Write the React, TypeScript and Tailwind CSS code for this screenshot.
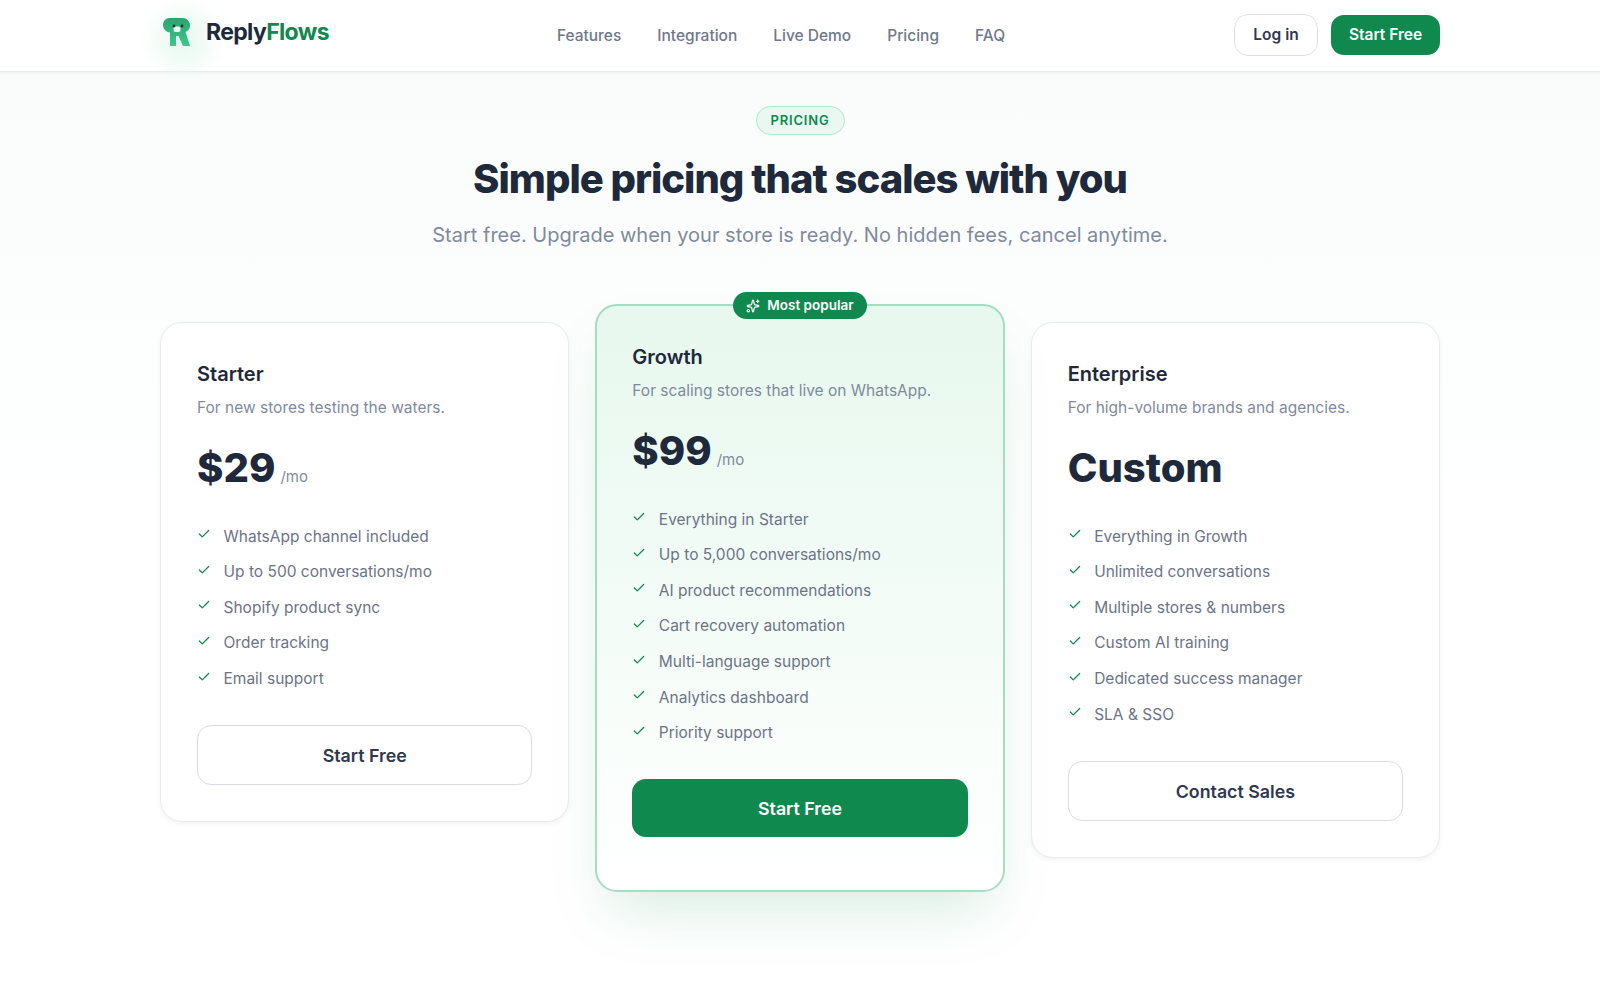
import React from 'react';
import { Check, Sparkles } from 'lucide-react';

const inter = { fontFamily: 'Inter, "Noto Sans", sans-serif' };

const Logo = () => (
  <div className="relative flex items-center gap-[16px]">
    <div className="absolute -left-[24px] -top-[20px] h-[88px] w-[88px] rounded-full bg-[radial-gradient(circle,#e6f8ef_0%,rgba(255,255,255,0)_70%)]" />
    <svg className="relative" width="27" height="29" viewBox="0 0 27 29">
      <defs>
        <linearGradient id="logoG" x1="0" y1="0" x2="0" y2="1">
          <stop offset="0" stopColor="#27a56f" />
          <stop offset="1" stopColor="#3fc68b" />
        </linearGradient>
      </defs>
      <path
        d="M6.500 0h13c4.200 0 7.500 3 7.500 7.500 0 3.200-1.800 5.500-4.500 6.500L27 28h-7l-4.500-10H13v10H7V14.500C3 14 0 11 0 7c0-4 3-7 6.500-7z"
        fill="url(#logoG)"
      />
      <rect x="10.500" y="8.500" width="7" height="5.500" rx="2" fill="#e9f9f1" />
      <circle cx="11" cy="8" r="1.400" fill="#1c2b3a" />
      <circle cx="19" cy="8" r="1.400" fill="#1c2b3a" />
    </svg>
    <span className="relative text-[23px] font-bold tracking-[-0.65px] text-[#1e293b]">
      Reply<span className="text-[#10894f]">Flows</span>
    </span>
  </div>
);

const Navbar = () => (
  <header className="relative z-10 h-[72px] border-b border-[#e9ecef] bg-white shadow-[0_1px_3px_rgba(15,23,42,0.05)]">
    <div className="mx-auto flex h-[71px] w-[1280px] items-center justify-between">
      <div className="w-[262px] -translate-y-[3px] pl-[3px]">
        <Logo />
      </div>
      <nav className="flex gap-9 text-[15.500px] font-medium text-[#6f788b]">
        <a href="#">Features</a>
        <a href="#">Integration</a>
        <a href="#">Live Demo</a>
        <a href="#">Pricing</a>
        <a href="#">FAQ</a>
      </nav>
      <div className="flex w-[300px] -translate-y-px items-center justify-end gap-[13px] text-[15.500px] font-semibold">
        <button className="h-[42px] w-[84px] rounded-[14px] border-[1.5px] border-[#dcdfe5] bg-white text-[#2f3850]">Log in</button>
        <button className="h-10 w-[109px] rounded-[13px] bg-[#10894f] text-white">Start Free</button>
      </div>
    </div>
  </header>
);

type Plan = {
  name: string;
  desc: string;
  price: string;
  suffix?: string;
  features: string[];
  cta: string;
  featured?: boolean;
};

const plans: Plan[] = [
  {
    name: 'Starter',
    desc: 'For new stores testing the waters.',
    price: '$29',
    suffix: '/mo',
    features: ['WhatsApp channel included', 'Up to 500 conversations/mo', 'Shopify product sync', 'Order tracking', 'Email support'],
    cta: 'Start Free',
  },
  {
    name: 'Growth',
    desc: 'For scaling stores that live on WhatsApp.',
    price: '$99',
    suffix: '/mo',
    features: ['Everything in Starter', 'Up to 5,000 conversations/mo', 'AI product recommendations', 'Cart recovery automation', 'Multi-language support', 'Analytics dashboard', 'Priority support'],
    cta: 'Start Free',
    featured: true,
  },
  {
    name: 'Enterprise',
    desc: 'For high-volume brands and agencies.',
    price: 'Custom',
    features: ['Everything in Growth', 'Unlimited conversations', 'Multiple stores & numbers', 'Custom AI training', 'Dedicated success manager', 'SLA & SSO'],
    cta: 'Contact Sales',
  },
];

const PlanCard = ({ plan }: { plan: Plan }) => (
  <div
    className={
      plan.featured
        ? 'relative -mt-[18px] rounded-[22px] border-2 border-[#a6dcc0] bg-[linear-gradient(180deg,#e7f8ee_0%,#f3fcf7_50%,#ffffff_100%)] px-[35px] pt-[36px] pb-[53px] shadow-[0_30px_60px_-15px_rgba(16,137,79,0.17)]'
        : 'rounded-[22px] border border-[#e9ecef] bg-white px-9 py-9 shadow-[0_2px_5px_rgba(15,23,42,0.05)]'
    }
  >
    {plan.featured && (
      <div className="absolute -top-[14px] left-1/2 flex h-[27px] w-[134px] -translate-x-1/2 items-center justify-center gap-[7px] rounded-full bg-[#10894f] text-[13.500px] font-semibold text-white">
        <Sparkles size={14} strokeWidth={2} />
        Most popular
      </div>
    )}
    <h3 className="text-[20px] leading-[30px] font-semibold text-[#1e293b]">{plan.name}</h3>
    <p className="mt-[7px] text-[15.500px] leading-[24px] text-[#7f8a9e]">{plan.desc}</p>
    <div className="mt-[18px] flex h-[60px] items-baseline gap-[5px]">
      <span className="text-[40px] leading-[60px] font-extrabold text-[#1e293b]">{plan.price}</span>
      {plan.suffix && <span className="text-[15px] text-[#7f8a9e]">{plan.suffix}</span>}
    </div>
    <ul className="mt-[26px] flex flex-col gap-[11px]">
      {plan.features.map((f) => (
        <li key={f} className="flex h-[24.600px] items-center gap-[12.500px] text-[15.500px] text-[#6b7488]">
          <Check size={14} strokeWidth={2.2} className="-translate-y-[2px] text-[#10894f]" />
          {f}
        </li>
      ))}
    </ul>
    {plan.featured ? (
      <button className="mt-[34px] h-[58px] w-full rounded-[14px] bg-[#10894f] pt-[2px] text-[17.800px] font-semibold text-white">{plan.cta}</button>
    ) : (
      <button className="mt-[34px] h-[60px] w-full rounded-[14px] border-[1.5px] border-[#dadde3] bg-white pt-[3px] text-[17.800px] font-semibold text-[#2f3850]">{plan.cta}</button>
    )}
  </div>
);

export default function App() {
  return (
    <div className="h-[1000px] overflow-hidden bg-white" style={inter}>
      <Navbar />
      <main className="bg-[linear-gradient(180deg,#f9fcfb_0px,#fcfefd_220px,#ffffff_480px)]">
        <section className="flex flex-col items-center pt-[34px]">
          <span className="flex h-[29px] w-[89px] items-center justify-center rounded-full border border-[#b7e4cb] bg-[#e9f8f0] text-[13px] font-semibold tracking-[0.8px] text-[#10894f]">
            PRICING
          </span>
          <h1 className="mt-[16px] text-[40px] leading-[56px] font-extrabold tracking-[-1px] text-[#1e293b]">
            Simple pricing that scales with you
          </h1>
          <p className="mt-[13px] text-[20px] leading-[30px] text-[#7f8a9e]">
            Start free. Upgrade when your store is ready. No hidden fees, cancel anytime.
          </p>
        </section>
        <section className="mx-auto mt-[72px] grid h-[606px] w-[1280px] grid-cols-3 items-start gap-[26px]">
          {plans.map((p) => (
            <PlanCard key={p.name} plan={p} />
          ))}
        </section>
      </main>
    </div>
  );
}
